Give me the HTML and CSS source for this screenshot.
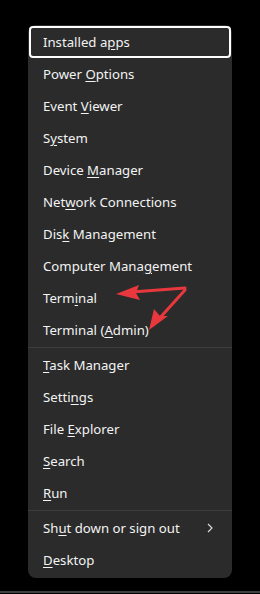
FILE: index.html
```html
<!DOCTYPE html>
<html lang="en">
<head>
    <meta charset="UTF-8">
    <meta name="viewport" content="width=device-width, initial-scale=1.0">
    <title>Quick Link menu</title>
    <link rel="stylesheet" href="styles.css">
</head>
<body>
    <div class="screen">
        <div class="menu">
            <div class="item focused">Installed a<u>p</u>ps</div>
            <div class="item">Power <u>O</u>ptions</div>
            <div class="item">Event <u>V</u>iewer</div>
            <div class="item">S<u>y</u>stem</div>
            <div class="item">Device <u>M</u>anager</div>
            <div class="item">Net<u>w</u>ork Connections</div>
            <div class="item">Dis<u>k</u> Management</div>
            <div class="item">Computer Mana<u>g</u>ement</div>
            <div class="item">Term<u>i</u>nal</div>
            <div class="item">Terminal (<u>A</u>dmin)</div>
            <div class="separator"></div>
            <div class="item"><u>T</u>ask Manager</div>
            <div class="item">Setti<u>n</u>gs</div>
            <div class="item">File <u>E</u>xplorer</div>
            <div class="item"><u>S</u>earch</div>
            <div class="item"><u>R</u>un</div>
            <div class="separator"></div>
            <div class="item submenu">
                <span>Sh<u>u</u>t down or sign out</span>
                <svg class="chevron" width="6" height="10" viewBox="0 0 6 10">
                    <path d="M1 1 L5 5 L1 9" fill="none" stroke="#d8d8d8" stroke-width="1.2"/>
                </svg>
            </div>
            <div class="item"><u>D</u>esktop</div>
        </div>

        <!-- annotation arrows -->
        <svg class="arrows" width="260" height="594" viewBox="0 0 260 594">
            <line x1="185" y1="288" x2="132" y2="292" stroke="#e8383d" stroke-width="3" stroke-linecap="round"/>
            <polygon points="116,294 139,285 136,293 140,300" fill="#e8383d"/>
            <line x1="185" y1="290" x2="158" y2="320" stroke="#e8383d" stroke-width="3" stroke-linecap="round"/>
            <polygon points="149,330 154,309 160,316 168,316" fill="#e8383d"/>
        </svg>
    </div>
    <div class="taskbar-edge"></div>
</body>
</html>
```

FILE: styles.css
```css
:root {
    --menu-bg: #2b2b2b;
    --menu-text: #f3f3f3;
    --menu-line: #3d3d3d;
}

html, body {
    margin: 0;
    padding: 0;
    background-color: #000;
}

body {
    font-family: "Noto Sans", "Open Sans", sans-serif;
    font-size: 13.2px;
    color: var(--menu-text);
    width: 260px;
    height: 594px;
    overflow: hidden;
}

.screen {
    position: relative;
    height: 591px;
    padding-top: 25px;
    box-sizing: border-box;
}

.menu {
    width: 204px;
    margin-left: 28px;
    padding: 1px 1px 2px;
    box-sizing: border-box;
    background-color: var(--menu-bg);
    border-radius: 8px;
    display: flex;
    flex-direction: column;
}

.item {
    height: 32px;
    line-height: 32px;
    padding: 0 12px 0 14px;
    box-sizing: border-box;
    border-radius: 4px;
    white-space: nowrap;
}

.item u {
    text-underline-offset: 2px;
    text-decoration-thickness: 1px;
}

.item.focused {
    border: 2px solid #fff;
    padding-left: 12px;
    line-height: 28px;
}

.submenu {
    display: flex;
    align-items: center;
    justify-content: space-between;
}

.chevron {
    margin-right: 6px;
}

.separator {
    height: 1px;
    margin: 1px -1px 1px;
    background-color: var(--menu-line);
}

.arrows {
    position: absolute;
    top: 0;
    left: 0;
    pointer-events: none;
}

.taskbar-edge {
    height: 2px;
    background-color: #3f3f3f;
}
```
